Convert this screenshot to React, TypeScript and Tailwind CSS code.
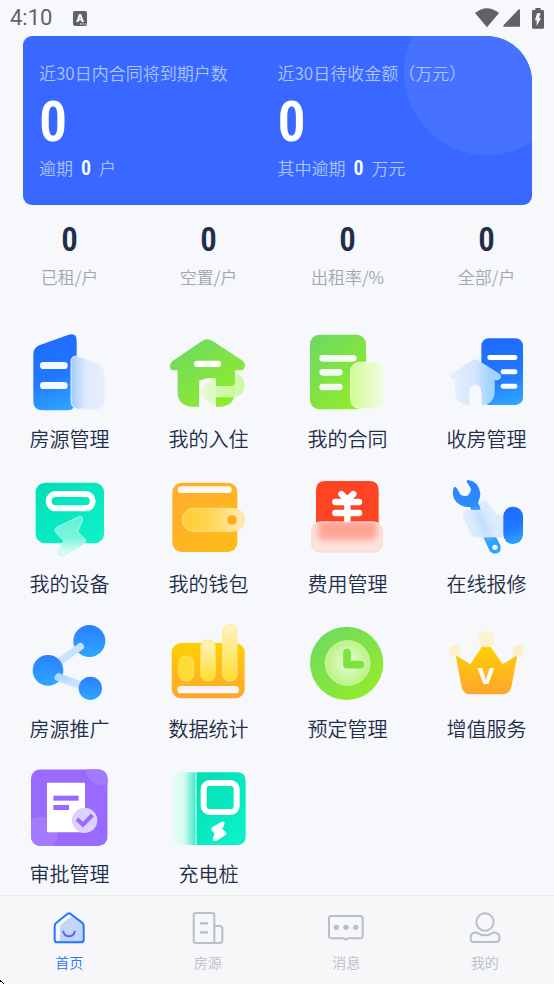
import type { ReactNode } from 'react';

const Gradient = ({ id, from, to, x2 = 0, y2 = 1 }: { id: string; from: string; to: string; x2?: number; y2?: number }) => (
  <linearGradient id={id} x1="0" y1="0" x2={x2} y2={y2}>
    <stop offset="0" stopColor={from} />
    <stop offset="1" stopColor={to} />
  </linearGradient>
);

// Shared gradients, referenced by id from every menu icon
const IconDefs = () => (
  <svg className="absolute h-0 w-0" aria-hidden="true">
    <defs>
      <linearGradient id="blue" x1="0.4" y1="0" x2="0.6" y2="1">
        <stop offset="0" stopColor="#1f6bff" />
        <stop offset="0.55" stopColor="#2177ff" />
        <stop offset="1" stopColor="#2ea4ff" />
      </linearGradient>
      <Gradient id="sky" from="#2b80ff" to="#2ea6ff" />
      <Gradient id="green" from="#6bd866" to="#93ec28" x2={0.8} />
      <Gradient id="teal" from="#02deb5" to="#0df0c8" x2={0.7} />
      <Gradient id="orange" from="#ffac2d" to="#ffba1b" x2={0.8} />
      <Gradient id="gold" from="#ffd000" to="#ffa62f" />
      <linearGradient id="glassBlue">
        <stop offset="0" stopColor="#a3caff" />
        <stop offset="0.45" stopColor="#dfebfe" />
        <stop offset="1" stopColor="#e7effe" />
      </linearGradient>
      <linearGradient id="glassHouse">
        <stop offset="0" stopColor="#e8effd" />
        <stop offset="0.5" stopColor="#d3e5fd" />
        <stop offset="0.75" stopColor="#a6d5ff" />
        <stop offset="1" stopColor="#9fcfff" />
      </linearGradient>
      <Gradient id="glassArrow" from="#e2fbd0" to="#c9f99b" x2={1} y2={0} />
      <linearGradient id="glassGreen">
        <stop offset="0" stopColor="#cffa90" />
        <stop offset="0.5" stopColor="#e2fbc0" />
        <stop offset="1" stopColor="#effbe4" />
      </linearGradient>
      <linearGradient id="glassBolt" x1="0" y1="0" x2="0" y2="1">
        <stop offset="0" stopColor="#5ff3d6" />
        <stop offset="0.55" stopColor="#7af5dd" />
        <stop offset="1" stopColor="#f0fdfa" />
      </linearGradient>
      <linearGradient id="glassFlap">
        <stop offset="0" stopColor="#ffcd33" />
        <stop offset="0.45" stopColor="#ffd555" />
        <stop offset="1" stopColor="#ffecbb" />
      </linearGradient>
      <Gradient id="glassBar" from="#fdf4c4" to="#ffdd2c" />
      <Gradient id="glassLink" from="#a9dcff" to="#d8e6fe" x2={0.7} />
      <linearGradient id="glassPile">
        <stop offset="0" stopColor="#e6fdf7" />
        <stop offset="0.5" stopColor="#d5faf1" />
        <stop offset="1" stopColor="#3beac8" />
      </linearGradient>
      <radialGradient id="clockFace">
        <stop offset="0" stopColor="#e6fbd8" />
        <stop offset="1" stopColor="#bcf386" />
      </radialGradient>
      <filter id="soft" x="-20%" y="-30%" width="140%" height="160%">
        <feGaussianBlur stdDeviation="10" />
      </filter>
    </defs>
  </svg>
);

const Icon = ({ viewBox, children }: { viewBox: string; children: ReactNode }) => (
  <svg className="h-20 w-20" viewBox={viewBox} fill="none" aria-hidden="true">
    {children}
  </svg>
);

const menuItems = [
  {
    label: '房源管理',
    icon: (
      <Icon viewBox="60 24 240 240">
        <path d="M70 88Q70 69 88 61L176 29Q200 23 200 46V225Q196 256 172 256H98Q70 256 70 228Z" fill="url(#blue)" />
        <path d="M183 112Q183 88 205 95L258 115Q282 125 282 150V226Q282 252 256 252H207Q183 252 183 226Z" fill="url(#glassBlue)" stroke="#e6effe" strokeWidth="3" />
        <rect x="90" y="111" width="83" height="21" rx="10" fill="#f4f8ff" />
        <rect x="90" y="171" width="83" height="21" rx="10" fill="#f4f8ff" />
      </Icon>
    ),
  },
  {
    label: '我的入住',
    icon: (
      <Icon viewBox="477 24 240 240">
        <path d="M576 48Q592 38 608 48L698 107Q705 113 705 122Q703 136 690 136H675V205Q670 243 632 245H617V165H568V245H545Q503 240 503 203V136H493Q480 136 480 122Q480 113 489 107Z" fill="url(#green)" />
        <path d="M568 246V186Q569 160 594 160Q603 156 617 165V246Z" fill="#f6f8fc" />
        <path d="M572 207Q566 200 572 193L607 160Q617 154 617 165V183H662Q674 183 675 170V143Q703 152 704 182Q702 215 668 217H617V236Q616 246 607 241Z" fill="url(#glassArrow)" fillOpacity="0.9" />
        <rect x="552" y="107" width="81" height="19" rx="9" fill="#fff" />
      </Icon>
    ),
  },
  {
    label: '我的合同',
    icon: (
      <Icon viewBox="54 24 240 240">
        <rect x="60" y="29" width="168" height="224" rx="28" fill="url(#green)" />
        <rect x="182" y="112" width="99" height="138" rx="26" fill="url(#glassGreen)" stroke="#f0fce0" strokeWidth="3" />
        <rect x="88" y="90" width="112" height="20" rx="10" fill="#f4fbf3" />
        <rect x="88" y="132" width="70" height="20" rx="10" fill="#f4fbf3" />
        <rect x="88" y="176" width="70" height="20" rx="10" fill="#f4fbf3" />
      </Icon>
    ),
  },
  {
    label: '收房管理',
    icon: (
      <Icon viewBox="471 24 240 240">
        <rect x="574" y="40" width="125" height="200" rx="22" fill="url(#blue)" />
        <rect x="592" y="90" width="90" height="15" rx="7" fill="#fff" />
        <rect x="632" y="133" width="50" height="15" rx="7" fill="#fff" />
        <rect x="632" y="176" width="50" height="15" rx="7" fill="#fff" />
        <path d="M543 109Q556 97 569 109L629 146Q641 158 622 166H614V205Q611 238 578 240H574V198Q572 180 556 180Q538 180 538 198V240Q498 240 496 205V161H488Q474 158 484 148Z" fill="url(#glassHouse)" />
        <rect x="569" y="200" width="6" height="42" fill="#f6f8fc" />
      </Icon>
    ),
  },
  {
    label: '我的设备',
    icon: (
      <Icon viewBox="60 24 240 240">
        <rect x="77" y="38" width="205" height="182" rx="28" fill="url(#teal)" />
        <rect x="116" y="72" width="132" height="43" rx="21" stroke="#fff" strokeWidth="18" />
        <path d="M138 173L204 141Q220 136 217 151L203 186L225 207Q232 215 222 221L160 255Q143 260 146 245L161 212L137 187Q131 179 138 173Z" fill="url(#glassBolt)" stroke="#a9f8e8" strokeWidth="3" />
      </Icon>
    ),
  },
  {
    label: '我的钱包',
    icon: (
      <Icon viewBox="477 24 240 240">
        <rect x="487" y="38" width="195" height="208" rx="28" fill="url(#orange)" />
        <rect x="503" y="49" width="162" height="20" rx="10" fill="#fdf9f2" />
        <rect x="517" y="115" width="186" height="69" rx="34" fill="url(#glassFlap)" stroke="#ffe08a" strokeWidth="3" />
        <circle cx="666" cy="150" r="15" fill="#ffab26" />
      </Icon>
    ),
  },
  {
    label: '费用管理',
    icon: (
      <Icon viewBox="54 24 240 240">
        <path d="M78 61Q78 33 106 33H238Q266 33 266 61V190H78Z" fill="#ff4424" />
        <path d="M154 72L172 90L190 72M136 96H207M136 129H207M172 90V160" stroke="#fff" strokeWidth="19" strokeLinecap="round" />
        <rect x="64" y="155" width="214" height="92" rx="26" fill="#fde3dd" />
        <clipPath id="trayClip">
          <rect x="64" y="155" width="214" height="92" rx="26" />
        </clipPath>
        <g clipPath="url(#trayClip)">
          <rect x="84" y="150" width="177" height="60" rx="14" fill="#ffa494" filter="url(#soft)" />
        </g>
        <rect x="65" y="156" width="212" height="90" rx="26" stroke="#fdd8d0" strokeWidth="3" />
      </Icon>
    ),
  },
  {
    label: '在线报修',
    icon: (
      <Icon viewBox="471 24 240 240">
        <path d="M534 30Q566 34 571 70Q571 86 564 98L631 226Q636 250 615 251Q602 250 598 241L540 111Q516 113 500 97Q483 77 491 53Q495 49 500 54L512 74Q524 81 535 76Q543 66 543 56L530 35Q530 30 534 30Z" fill="url(#sky)" />
        <circle cx="615" cy="232" r="8" fill="#f4f8ff" />
        <path d="M574 94Q583 86 592 97L616 130Q622 137 640 137V202H560Q546 202 541 190L520 140Q516 122 532 120H572Q566 102 574 94Z" fill="#dcebfe" />
        <path d="M548 122H574L608 200H582Z" fill="#b9dcff" filter="url(#soft)" />
        <rect x="640" y="110" width="59" height="112" rx="29" fill="url(#blue)" />
      </Icon>
    ),
  },
  {
    label: '房源推广',
    icon: (
      <Icon viewBox="60 24 240 240">
        <circle cx="238" cy="78" r="48" fill="url(#sky)" />
        <path d="M211 95L140 147" stroke="#c8e1ff" strokeWidth="22" strokeLinecap="round" />
        <circle cx="114" cy="166" r="46" fill="url(#sky)" />
        <path d="M146 187L226 217" stroke="url(#glassLink)" strokeWidth="24" strokeLinecap="round" />
        <circle cx="241" cy="220" r="35" fill="url(#sky)" />
      </Icon>
    ),
  },
  {
    label: '数据统计',
    icon: (
      <Icon viewBox="477 24 240 240">
        <rect x="485" y="84" width="219" height="166" rx="28" fill="url(#gold)" />
        <rect x="507" y="123" width="44" height="75" rx="21" fill="#ffdb38" stroke="#ffe45c" strokeWidth="3" />
        <rect x="572" y="75" width="44" height="123" rx="21" fill="url(#glassBar)" stroke="#ffe45c" strokeWidth="3" />
        <rect x="638" y="29" width="43" height="169" rx="21" fill="url(#glassBar)" stroke="#ffea86" strokeWidth="3" />
        <rect x="502" y="213" width="185" height="22" rx="11" fill="#f8f6f5" />
      </Icon>
    ),
  },
  {
    label: '预定管理',
    icon: (
      <Icon viewBox="54 24 240 240">
        <circle cx="170" cy="145" r="110" fill="url(#green)" />
        <circle cx="173" cy="144" r="67" fill="url(#clockFace)" stroke="#cdf7a8" strokeWidth="3" />
        <path d="M171 113V149H211" stroke="#7de23c" strokeWidth="23" strokeLinecap="round" strokeLinejoin="round" />
      </Icon>
    ),
  },
  {
    label: '增值服务',
    icon: (
      <Icon viewBox="471 24 240 240">
        <path d="M497 120L541 148L578 92H600L638 148L682 120L665 212Q660 238 636 238H542Q519 238 514 212Z" fill="url(#gold)" />
        <circle cx="494" cy="107" r="18" fill="#fdeed0" />
        <circle cx="589" cy="72" r="25" fill="#fef2cc" />
        <circle cx="684" cy="107" r="18" fill="#fdeed0" />
        <text x="588" y="207" textAnchor="middle" fontSize="88" fontWeight="700" fill="#fdf9f2" className="font-[Inter,sans-serif]">
          v
        </text>
      </Icon>
    ),
  },
  {
    label: '审批管理',
    icon: (
      <Icon viewBox="60 24 240 240">
        <clipPath id="approvalClip">
          <rect x="63" y="28" width="230" height="230" rx="28" />
        </clipPath>
        <g clipPath="url(#approvalClip)">
          <rect x="63" y="28" width="230" height="230" fill="#986aff" />
          <circle cx="275" cy="28" r="47" fill="#a47bff" />
          <circle cx="90" cy="223" r="53" fill="#a47bff" />
        </g>
        <rect x="111" y="68" width="114" height="149" rx="3" fill="#fff" />
        <rect x="130" y="107" width="76" height="15" fill="#986aff" />
        <rect x="130" y="135" width="47" height="15" fill="#986aff" />
        <circle cx="224" cy="181" r="38" fill="#dcd2fb" />
        <path d="M201 177L219 194L247 165" stroke="#986aff" strokeWidth="12" />
      </Icon>
    ),
  },
  {
    label: '充电桩',
    icon: (
      <Icon viewBox="477 24 240 240">
        <path d="M558 37H514Q488 37 488 63V229Q488 255 514 255H558Z" fill="url(#glassPile)" />
        <path d="M558 37H681Q707 37 707 63V229Q707 255 681 255H558Z" fill="url(#teal)" />
        <path d="M558 37V255" stroke="#b5f8e9" strokeWidth="4" />
        <rect x="581" y="69" width="99" height="87" rx="18" stroke="#fff" strokeWidth="18" />
        <path d="M607 202L635 185Q646 182 643 193L637 207L648 217Q651 222 646 226L620 242Q607 246 609 234L614 221L605 211Q602 206 607 202Z" fill="#fff" />
      </Icon>
    ),
  },
];

const stats = [
  { value: 0, label: '已租/户' },
  { value: 0, label: '空置/户' },
  { value: 0, label: '出租率/%' },
  { value: 0, label: '全部/户' },
];

const summary = [
  { title: '近30日内合同将到期户数', value: 0, note: '逾期', overdue: 0, unit: '户' },
  { title: '近30日待收金额（万元）', value: 0, note: '其中逾期', overdue: 0, unit: '万元' },
];

const tabs = [
  {
    label: '首页',
    active: true,
    viewBox: '154 60 108 108',
    icon: (
      <>
        <path d="M181 112Q181 106 186 102L215 79L249 103V156H181Z" fill="#c3d5fb" />
        <path d="M203 72Q208 68 213 72L247 98Q252 102 252 108V149Q252 157 244 157H173Q165 157 165 149V108Q165 102 170 98Z" stroke="currentColor" strokeWidth="6" />
        <path d="M190 122Q194 139 208 139Q222 139 226 122" stroke="#4b6ef5" strokeWidth="6" />
      </>
    ),
  },
  {
    label: '房源',
    viewBox: '569 60 108 108',
    icon: (
      <g stroke="currentColor" strokeWidth="6">
        <rect x="580" y="69" width="62" height="90" rx="6" />
        <path d="M642 108H658Q666 108 666 116V151Q666 159 658 159H640" />
        <path d="M599 100H623M599 127H623" strokeWidth="7" />
      </g>
    ),
  },
  {
    label: '消息',
    viewBox: '154 60 108 108',
    icon: (
      <>
        <path d="M164 78H251Q258 78 258 85V138Q258 145 251 145H215L208 149L201 145H164Q157 145 157 138V85Q157 78 164 78Z" stroke="currentColor" strokeWidth="6" />
        <g fill="currentColor">
          <circle cx="179" cy="112" r="8" />
          <circle cx="208" cy="112" r="8" />
          <circle cx="237" cy="112" r="8" />
        </g>
      </>
    ),
  },
  {
    label: '我的',
    viewBox: '569 60 108 108',
    icon: (
      <g stroke="currentColor" strokeWidth="6">
        <circle cx="623" cy="96" r="26" />
        <path d="M596 127Q623 144 650 127Q666 130 666 141V148Q666 156 657 156H589Q580 156 580 148V141Q580 130 596 127Z" />
      </g>
    ),
  },
];

const StatusBar = () => (
  <div className="flex h-9 items-center px-[10px] text-[#616264]">
    <span className="font-[Roboto,sans-serif] text-[22px] font-normal leading-9">4:10</span>
    <svg className="ml-5 h-4 w-4" viewBox="0 0 16 16" aria-hidden="true">
      <rect x="1" y="1" width="14" height="15" rx="2" fill="currentColor" />
      <text x="8" y="12" textAnchor="middle" fontSize="11" fontWeight="900" fill="#fff" className="font-[Roboto,sans-serif]">
        A
      </text>
      <path d="M8 14h1.500M10.500 14h1.500M13 14h1" stroke="#fff" strokeWidth="1.200" />
    </svg>
    <div className="ml-auto flex items-center fill-current">
      <svg className="h-5 w-6" viewBox="0 0 72 60" aria-hidden="true">
        <path d="M0 15Q36 -13 72 15L36 58Z" />
      </svg>
      <svg className="ml-1 h-[18px] w-[17px]" viewBox="0 0 51 54" aria-hidden="true">
        <path d="M47 1Q51 0 51 4V53H3Q-1 52 2 48Z" />
      </svg>
      <svg className="ml-3 h-[21px] w-3" viewBox="0 0 36 63" aria-hidden="true">
        <path d="M10 0H26V6H32Q36 6 36 10V59Q36 62 32 62H4Q0 62 0 59V10Q0 6 4 6H10Z" />
        <path d="M15 16H26L21 30H27L14 54V37H9Z" fill="#f6f8fc" />
      </svg>
    </div>
  </div>
);

const digits = "font-['Roboto_Condensed','Liberation_Sans',sans-serif] font-semibold";

export default function App() {
  return (
    <div className="relative flex min-h-screen flex-col overflow-hidden bg-[#f6f8fc] font-['Noto_Sans_CJK_SC',sans-serif] font-[350]">
      <IconDefs />
      <StatusBar />

      <main>
        <section className="relative ml-[23px] mr-[22px] grid grid-cols-2 overflow-hidden rounded-[9px] rounded-tr-[46px] bg-[#3868ff] px-4 py-[25px]">
          <div className="absolute -right-[38px] -top-[47px] h-[166px] w-[166px] rounded-full bg-[#4672ff]"></div>
          {summary.map((item) => (
            <div key={item.title} className="relative whitespace-nowrap text-[17px] leading-6 text-[#b0c4ff]">
              <h2>{item.title}</h2>
              <p className={`${digits} mb-0.5 mt-1.5 text-[56px] leading-[63px] text-white`}>{item.value}</p>
              <p>
                {item.note}
                <b className={`${digits} mx-2 text-xl leading-6 text-white`}>{item.overdue}</b>
                {item.unit}
              </p>
            </div>
          ))}
        </section>

        <section className="-mr-0.5 grid grid-cols-4 pt-4 text-center">
          {stats.map((stat) => (
            <div key={stat.label}>
              <p className={`${digits} text-[33px] leading-[38px] text-[#232d49]`}>{stat.value}</p>
              <p className="mt-1.5 text-[17px] leading-6 text-[#a1a7aa]">{stat.label}</p>
            </div>
          ))}
        </section>

        <section className="-mr-0.5 mt-11 grid grid-cols-4 gap-y-[26px] pb-2">
          {menuItems.map((item) => (
            <button key={item.label} type="button" className="flex flex-col items-center">
              {item.icon}
              <span className="mt-[13px] text-xl leading-[26px] text-[#232d49]">{item.label}</span>
            </button>
          ))}
        </section>
      </main>

      <nav className="mt-auto grid grid-cols-4 border-t border-[#ecedf1] bg-[#f7f7f9] pb-3 pt-[14px]">
        {tabs.map((tab) => (
          <a
            key={tab.label}
            href="#"
            aria-current={tab.active ? 'page' : undefined}
            className={`flex flex-col items-center ${tab.active ? 'text-[#2374ff]' : 'text-[#b5c0c8]'}`}
          >
            <svg className="h-9 w-9" viewBox={tab.viewBox} fill="none" aria-hidden="true">
              {tab.icon}
            </svg>
            <span className="mt-1.5 text-sm leading-5">{tab.label}</span>
          </a>
        ))}
      </nav>

      {/* Pointer tip in the corner */}
      <svg className="absolute bottom-0 left-0 h-1 w-1" viewBox="0 0 4 4" aria-hidden="true">
        <path d="M0 0h1v1h1v1h1v1h1v1H3V3H2V2H0Z" fill="#111" />
      </svg>
    </div>
  );
}
